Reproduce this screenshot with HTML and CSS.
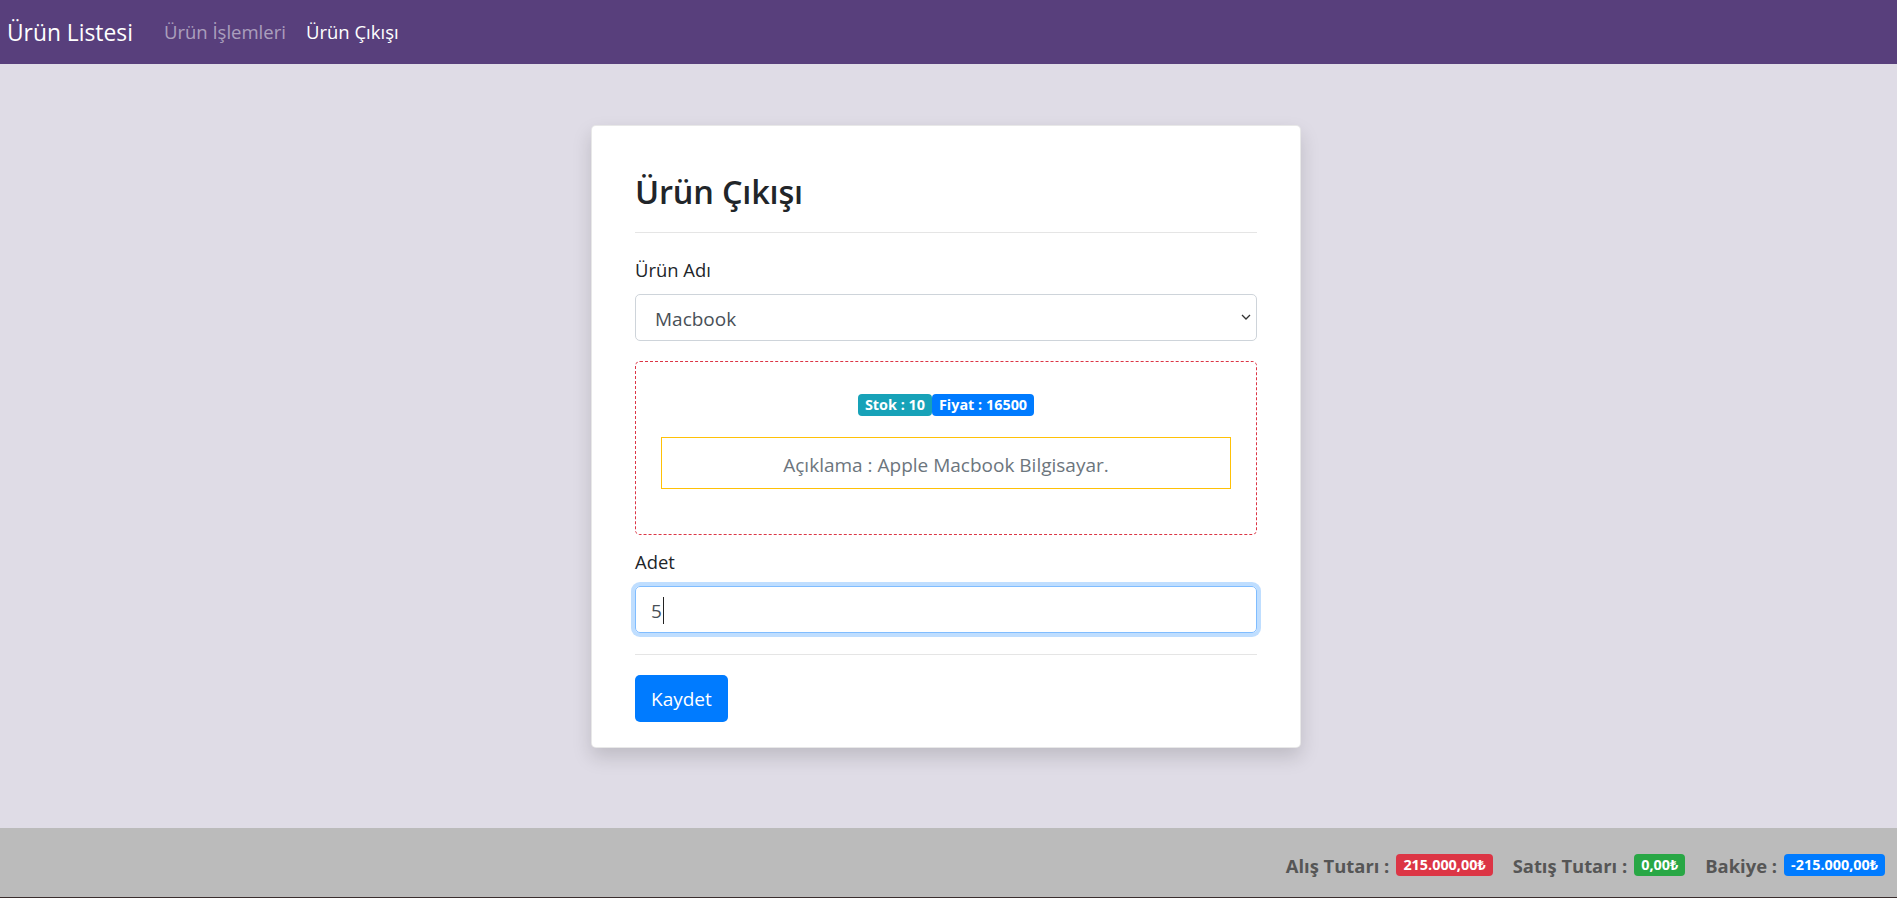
FILE: index.html
```html
<!DOCTYPE html>
<html lang="tr">
<head>
<meta charset="utf-8">
<title>Ürün Çıkışı</title>
<link rel="stylesheet" href="styles.css">
</head>
<body>
<nav class="navbar">
  <a class="brand" href="#">Ürün Listesi</a>
  <ul class="nav">
    <li><a class="nav-link" href="#">Ürün İşlemleri</a></li>
    <li><a class="nav-link active" href="#">Ürün Çıkışı</a></li>
  </ul>
</nav>
<main class="main">
  <section class="card">
    <h2 class="title">Ürün Çıkışı</h2>
    <hr class="divider divider-top">
    <label class="label">Ürün Adı</label>
    <div class="select">
      <span class="select-text">Macbook</span>
      <svg class="chevron" width="10" height="6" viewBox="0 0 10 6"><path d="M1 1l4 4 4-4" fill="none" stroke="#333" stroke-width="1.3"/></svg>
    </div>
    <div class="info">
      <div class="badges"><span class="badge badge-info">Stok : 10</span><span class="badge badge-primary">Fiyat : 16500</span></div>
      <p class="desc">Açıklama : Apple Macbook Bilgisayar.</p>
    </div>
    <label class="label">Adet</label>
    <div class="input"><span class="input-text">5</span><span class="caret"></span></div>
    <hr class="divider divider-bottom">
    <button class="btn" type="button">Kaydet</button>
  </section>
</main>
<footer class="footer">
  <span class="sum-label first">Alış Tutarı :</span><span class="badge badge-danger">215.000,00₺</span>
  <span class="sum-label">Satış Tutarı :</span><span class="badge badge-success">0,00₺</span>
  <span class="sum-label">Bakiye :</span><span class="badge badge-primary">-215.000,00₺</span>
</footer>
</body>
</html>
```
FILE: styles.css
```css
* { box-sizing: border-box; }

html, body { height: 100%; }

body {
  margin: 0;
  min-height: 100vh;
  display: flex;
  flex-direction: column;
  background: #dfdce6;
  font-family: "Open Sans", "Noto Sans", "DejaVu Sans", sans-serif;
  color: #212529;
}

.navbar {
  height: 64px;
  flex: none;
  background: #583f7c;
  display: flex;
  align-items: center;
  padding-left: 7px;
}

.brand {
  font-size: 22.8px;
  color: #fff;
  text-decoration: none;
  margin-right: 31px;
}

.nav {
  display: flex;
  gap: 20px;
  list-style: none;
  margin: 0 0 2px;
  padding: 0;
}

.nav-link {
  font-size: 18.5px;
  color: rgba(255, 255, 255, 0.5);
  text-decoration: none;
}

.nav-link.active { color: #fff; }

.main {
  flex: 1;
  display: flex;
  justify-content: center;
  align-items: flex-start;
  padding: 61px 5px 0 0;
}

.card {
  width: 710px;
  background: #fff;
  border: 1px solid rgba(0, 0, 0, 0.09);
  border-radius: 5px;
  padding: 45px 43px 25px;
  box-shadow: 0 9px 19px rgba(0, 0, 0, 0.15);
}

.title {
  margin: 0;
  font-size: 32.5px;
  font-weight: 600;
  line-height: 41px;
  color: #212529;
  letter-spacing: -0.2px;
}

.divider {
  border: 0;
  border-top: 1px solid rgba(0, 0, 0, 0.1);
  height: 0;
}

.divider-top { margin: 20px 0 23px; }
.divider-bottom { margin: 0 0 20px; }

.label {
  display: block;
  font-size: 18.4px;
  line-height: 27.6px;
  margin-bottom: 10.4px;
  color: #212529;
}

.select {
  height: 47px;
  border: 1px solid #ced4da;
  border-radius: 5px;
  padding: 3px 5px 0 19px;
  display: flex;
  align-items: center;
  justify-content: space-between;
  font-size: 19px;
  color: #495057;
  margin-bottom: 20px;
}

.chevron { display: block; margin-top: -3px; }

.info {
  border: 1px dashed #dc3545;
  border-radius: 5px;
  padding: 32px 25px 45px;
  margin-bottom: 13px;
}

.badges {
  display: flex;
  justify-content: center;
  height: 22px;
  margin-bottom: 21px;
}

.badge {
  display: inline-flex;
  align-items: center;
  height: 22px;
  padding: 0 7px;
  font-size: 14.4px;
  font-weight: 700;
  color: #fff;
  border-radius: 4px;
  line-height: 1;
  white-space: nowrap;
}

.badge-info { background: #17a2b8; }
.badge-primary { background: #007bff; }
.badge-danger { background: #dc3545; }
.badge-success { background: #28a745; }

.desc {
  margin: 0;
  height: 52px;
  border: 1px solid #ffc107;
  padding-top: 4px;
  line-height: 46px;
  text-align: center;
  font-size: 19px;
  color: #6c757d;
}

.input {
  height: 47px;
  border: 1px solid #80bdff;
  border-radius: 5px;
  box-shadow: 0 0 0 4px rgba(0, 123, 255, 0.25);
  padding: 3px 0 0 15px;
  display: flex;
  align-items: center;
  font-size: 19px;
  color: #495057;
  margin-bottom: 21px;
}

.caret {
  display: inline-block;
  width: 1px;
  height: 27px;
  margin-left: 1px;
  background: #222;
}

.btn {
  height: 47px;
  padding: 2px 16px 0;
  border: 0;
  border-radius: 5px;
  background: #007bff;
  color: #fff;
  font-family: inherit;
  font-size: 19px;
  cursor: pointer;
}

.footer {
  flex: none;
  height: 70px;
  background: #bbbbbb;
  border-bottom: 1px solid #3a2e2e;
  display: flex;
  justify-content: flex-end;
  align-items: center;
  padding: 5px 12px 0 0;
}

.sum-label {
  font-size: 18.4px;
  font-weight: 700;
  color: #565656;
  margin: 0 7px 0 20px;
}

.sum-label.first { margin-left: 0; }
```
